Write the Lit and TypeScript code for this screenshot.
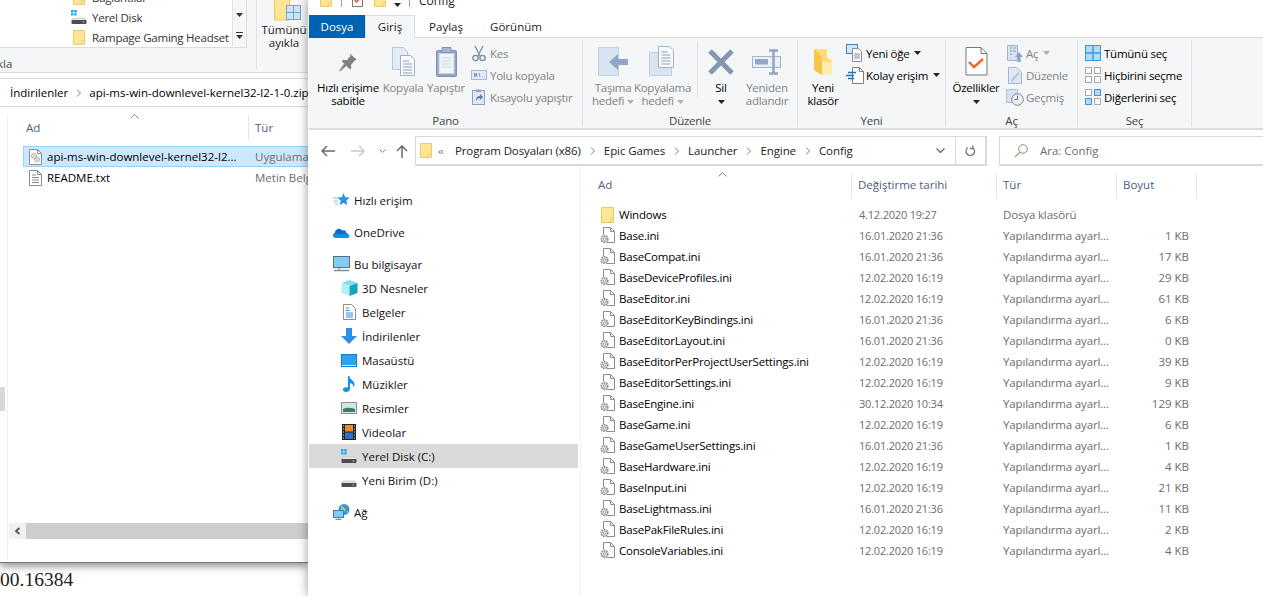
import { LitElement, html, svg, css } from "lit";
import { customElement } from "lit/decorators.js";

const folder = (w = 13, h = 16) => html`<svg width=${w} height=${h} viewBox="0 0 13 16"><path d="M.5.5h12v15H.5z" fill="#ffe695" stroke="#e9c662"/><path d="M9.5 15.5v-4h3" fill="#fff3c4" stroke="#e9c662"/></svg>`;
const gearFile = html`<svg width="15" height="17" viewBox="0 0 15 17"><path d="M3.5 8V.5h7l4 4v11H7" fill="#fff" stroke="#8c8c8c"/><path d="M10.500.5v4h4" fill="none" stroke="#8c8c8c"/><circle cx="4.500" cy="12" r="3.300" fill="#e4e4e4" stroke="#868686" stroke-width="1.500" stroke-dasharray="1.600 .8"/><circle cx="4.500" cy="12" r="1.300" fill="#fff" stroke="#a0a0a0"/></svg>`;
const txtFile = html`<svg width="13" height="16" viewBox="0 0 13 16"><path d="M.5.5h8l4 4v11H.5z" fill="#fff" stroke="#8c8c8c"/><path d="M8.500.5v4h4M3 5h4M3 7.500h7M3 10h7M3 12.500h7" fill="none" stroke="#8c8c8c"/></svg>`;
const appFile = html`<svg width="13" height="16" viewBox="0 0 13 16"><path d="M.5.5h8l4 4v11H.5z" fill="#fff" stroke="#8c8c8c"/><path d="M8.500.5v4h4" fill="none" stroke="#8c8c8c"/><circle cx="5" cy="7" r="2.600" fill="#ddd" stroke="#999" stroke-dasharray="1.300 .7"/><circle cx="8" cy="10.500" r="2.400" fill="#ddd" stroke="#999" stroke-dasharray="1.300 .7"/></svg>`;
const drive = (win: boolean) => html`<svg width="16" height="16" viewBox="0 0 16 16">${win ? svg`<path d="M0 1h2.500v2.400H0zM3.200 1h2.500v2.400H3.200zM0 4.200h2.500v2.400H0zM3.200 4.200h2.500v2.400H3.200z" fill="#19aaf0"/>` : ""}<path d="M2 9h12l1.500 2.500H.5z" fill="#e4e4e4" stroke="#bdbdbd" stroke-width=".6"/><rect x=".5" y="11" width="15" height="4" rx="1" fill="#4d4d4d"/><rect x="11.500" y="12.300" width="1.600" height="1.400" fill="#4fe04f"/></svg>`;
const pin = html`<svg width="22" height="22" viewBox="0 0 30 30"><path d="M17 3l10 9-3 1-5 6 .5 5-2 1-11-11 2-2 5 .5 5-6zM10 17l-7 10 1 1 9-8z" fill="#808080"/></svg>`;
const copyIcon = html`<svg width="25" height="29" viewBox="0 0 25 29"><path d="M1.500.5h11l4 4v18h-15z" fill="#e3ebf6" stroke="#b9c7dc"/><path d="M9.500 8.500h10l4 4v16h-14z" fill="#f8fafd" stroke="#9fb1cb"/><path d="M12 14h6M12 17h9M12 20h9M12 23h9M12 26h9" stroke="#8c9fbb"/></svg>`;
const pasteIcon = html`<svg width="21" height="30" viewBox="0 0 21 30"><rect x=".5" y="3.500" width="20" height="26" rx="1" fill="#93a5c6" stroke="#7f93b8"/><rect x="3" y="6.500" width="15" height="20" fill="#f3f6fb" stroke="#c6d0e2"/><path d="M6 .5h9v5H6z" fill="#a8b6cf" stroke="#8193b4"/><path d="M5.500 11h10M5.500 14h10M5.500 17h10M5.500 20h10" stroke="#ccd6e7"/></svg>`;
const cutIcon = html`<svg width="14" height="17" viewBox="0 0 14 17"><path d="M3 1l5 10M11 1L6 11" stroke="#8b9ab5" stroke-width="1.600" fill="none"/><circle cx="3.500" cy="13" r="2.600" fill="none" stroke="#7d8ca8" stroke-width="1.400"/><circle cx="10.500" cy="13" r="2.600" fill="none" stroke="#7d8ca8" stroke-width="1.400"/></svg>`;
const pathIcon = html`<svg width="16" height="10" viewBox="0 0 16 10"><rect x=".5" y=".5" width="15" height="9" fill="#e4ebf5" stroke="#a7b8d0"/><path d="M3 3l1 4 1-4 1 4M8 3l1 4M11 7h.6M13 7h.6" stroke="#6f83a5" fill="none" stroke-width=".8"/></svg>`;
const shortcutIcon = html`<svg width="13" height="16" viewBox="0 0 13 16"><rect x=".5" y="1.500" width="12" height="14" fill="#dfe6f1" stroke="#8fa1bf"/><rect x="4" y=".5" width="5" height="2.500" fill="#8fa1bf"/><path d="M4 12c0-4 2-5 4-5V5l3 3-3 3V9c-1.500 0-3 1-4 3z" fill="#5c7aa8"/></svg>`;
const moveIcon = html`<svg width="32" height="32" viewBox="0 0 32 32"><path d="M1.500 1.500h20v28h-20z" fill="#d9e4f3" stroke="#c3d0e3"/><path d="M31 13h-10V8l-9 8 9 8v-5h10z" fill="#8fa6c9"/></svg>`;
const copyToIcon = html`<svg width="32" height="32" viewBox="0 0 32 32"><path d="M2.500 6.500h22v23h-22z" fill="#d9e4f3" stroke="#c3d0e3"/><path d="M11.500.5h11l4 4v17h-15z" fill="#f8fafd" stroke="#9fb1cb"/><path d="M14.500 6h6M14.500 9h9M14.500 12h9M14.500 15h9M14.500 18h9" stroke="#8c9fbb"/></svg>`;
const xIcon = html`<svg width="28" height="28" viewBox="0 0 28 28"><path d="M3 3l22 22M25 3L3 25" stroke="#8596b3" stroke-width="5"/></svg>`;
const renameIcon = html`<svg width="30" height="28" viewBox="0 0 30 28"><rect x=".5" y="8.500" width="28" height="11" fill="#eaf0f8" stroke="#a5b5cf"/><rect x="3" y="11" width="13" height="5.500" fill="#93a6c5"/><path d="M17 2.500h9M17 25.500h9M21.500 2.500v23" stroke="#93a4c0" stroke-width="2.500"/></svg>`;
const newFolder = html`<svg width="20" height="28" viewBox="0 0 20 28"><path d="M1 1h13v8l5 4v14H9L1 22z" fill="#fddc7c"/><path d="M1 1l8 8v18l-8-5z" fill="#f6c64a"/><path d="M9 14h10v13H9z" fill="#ffedaf"/></svg>`;
const newItem = html`<svg width="18" height="18" viewBox="0 0 18 18"><rect x=".5" y=".5" width="11" height="9" fill="#cfe6fa" stroke="#4a7fae"/><path d="M6.500 4.500h6l3 3v10h-9z" fill="#fff" stroke="#8c8c8c"/><path d="M8 10h6M8 12h6M8 14h6" stroke="#7f8db0"/></svg>`;
const easyAccess = html`<svg width="18" height="17" viewBox="0 0 18 17"><path d="M6.500 .5h7l4 4v12h-11z" fill="#fff" stroke="#7d7d7d"/><path d="M13.500.5v4h4" fill="none" stroke="#7d7d7d"/><path d="M2 5.500h8M0 8.500h8M2 11.500h6" stroke="#2470b8" stroke-width="1.300"/></svg>`;
const propsIcon = html`<svg width="23" height="29" viewBox="0 0 23 29"><path d="M1 .5h15l6 6V28H1z" fill="#fff" stroke="#777"/><path d="M16 .5v6h6" fill="none" stroke="#777"/><path d="M4 15l5 5 9-8" fill="none" stroke="#f0651e" stroke-width="2.400"/></svg>`;
const openIcon = html`<svg width="16" height="17" viewBox="0 0 16 17"><path d="M.5.5h10v15H.5z" fill="#d7e2f1" stroke="#a4b5cf"/><path d="M3 3h2M6 3h3M3 6h2M6 6h3M3 9h2" stroke="#8498ba"/><path d="M12 7l4 5h-2.500v5h-3v-5H8z" fill="#8ea4c5"/></svg>`;
const editIcon = html`<svg width="14" height="17" viewBox="0 0 14 17"><path d="M.5.5h8l5 5v11H.500z" fill="#dee7f4" stroke="#a4b5cf"/><path d="M3 13l7-8 1.500 1.500-7 8H3z" fill="#b6c4da"/></svg>`;
const historyIcon = html`<svg width="18" height="17" viewBox="0 0 18 17"><rect x=".5" y=".5" width="11" height="13" fill="#d7e2f1" stroke="#b3c2d8"/><circle cx="11.500" cy="10.500" r="5.800" fill="#eef0f4" stroke="#7e8590"/><path d="M11.500 6.500v4h-3" fill="none" stroke="#6f7680"/></svg>`;
const B = "#3b97e0", G = "#a9a9a9", L = "#aedcfa";
const grid = (cells: string[], strokes: string[]) => html`<svg width="16" height="16" viewBox="0 0 16 16">${[[0, 0], [9, 0], [0, 9], [9, 9]].map(([x, y], i) => svg`<rect x=${x + 0.5} y=${y + 0.5} width="6" height="6" fill=${cells[i]} stroke=${strokes[i]}/>`)}</svg>`;
const selAll = html`<svg width="16" height="16" viewBox="0 0 16 16"><rect x=".5" y=".5" width="15" height="15" fill=${L} stroke=${B}/><path d="M8 0v16M0 8h16" stroke=${B} stroke-width="1.400"/></svg>`;
const selNone = grid(["#fff", "#fff", "#fff", "#fff"], [G, G, G, G]);
const selInv = grid(["#fff", L, L, "#fff"], [G, B, B, G]);
const extractIcon = html`<svg width="28" height="21" viewBox="0 0 28 21"><path d="M.5-3h15v23H.5z" fill="#ffe695" stroke="#e9c662"/><rect x="12.500" y="5.500" width="14" height="14" fill="#cfe3f6" stroke="#6ea8d8"/><path d="M19.500 5v15M12 12.500h15" stroke="#6ea8d8"/></svg>`;
const star = html`<svg width="17" height="16" viewBox="0 0 17 16"><path d="M10.500 1l1.700 4.300 4.600.3-3.500 3 1.100 4.600-3.900-2.500-3.900 2.500 1.100-4.600-3.500-3 4.600-.3z" fill="#2b8fe8"/><path d="M0 6h5M1 9h4M2 12h3" stroke="#7dbbf0"/></svg>`;
const cloud = html`<svg width="17" height="11" viewBox="0 0 17 11"><path d="M2.500 11a2.500 2.500 0 0 1-.6-4.900A4 4 0 0 1 9.200 3.500 3.500 3.500 0 0 1 13.500 6.200 2.500 2.500 0 0 1 14.500 11z" fill="#0a6cc9"/><path d="M1 9.500a3 3 0 0 1 2-3l3 1 5-1 5 1.500.5 1.500a2 2 0 0 1-2 1.500H2.500z" fill="#1490df"/></svg>`;
const pc = html`<svg width="17" height="16" viewBox="0 0 17 16"><rect x=".5" y=".5" width="16" height="11" fill="#7fcdf7" stroke="#5d6d7e"/><path d="M6 12v1.500M1 14.500h15" stroke="#7c8ea0" stroke-width="1.500"/></svg>`;
const cube = html`<svg width="17" height="16" viewBox="0 0 17 16"><path d="M8.500 0l8 3-8 3-8-3z" fill="#7fe0ea"/><path d="M.5 3l8 3v10l-8-3z" fill="#b7eef2"/><path d="M16.500 3l-8 3v10l8-3z" fill="#12a5bd"/></svg>`;
const docIcon = html`<svg width="13" height="16" viewBox="0 0 13 16"><path d="M.5.5h8l4 4v11H.5z" fill="#fff" stroke="#8c8c8c"/><path d="M3 4h3M2.500 6.500h4M3 9h7M3 11h7M3 13h7" stroke="#2b8fe8"/></svg>`;
const down = html`<svg width="16" height="16" viewBox="0 0 16 16"><path d="M5 0h6v8h5l-8 8-8-8h5z" fill="#2f8fe6"/></svg>`;
const desk = html`<svg width="16" height="13" viewBox="0 0 16 13"><rect width="16" height="13" fill="#0c7fdb"/><rect x="1" y="1" width="14" height="10" fill="#2ba3f2"/><rect x="1" y="11" width="14" height="1" fill="#cfe9fb"/></svg>`;
const music = html`<svg width="12" height="16" viewBox="0 0 12 16"><path d="M5 0h1.500c0 4 5 4 5 8.500 0 1-.4 2-1 2.500.2-2.500-2-3.500-3.500-4v6c0 2-2 3-4 3S0 15 0 13.500 2 11 5 11.500z" fill="#0f96e8"/></svg>`;
const pic = html`<svg width="16" height="12" viewBox="0 0 16 12"><rect x=".5" y=".5" width="15" height="11" fill="#cfe3f0" stroke="#909090"/><path d="M2 7c4-2 8-1 12 0v3H2z" fill="#3d7f5a"/></svg>`;
const film = html`<svg width="14" height="16" viewBox="0 0 14 16"><rect width="14" height="16" fill="#232323"/><rect x="3" y="1" width="8" height="6.500" fill="#e98d2c"/><rect x="3" y="8.500" width="8" height="6.500" fill="#2f6fc7"/><path d="M1 2h1M1 5h1M1 8h1M1 11h1M1 14h1M12 2h1M12 5h1M12 8h1M12 11h1M12 14h1" stroke="#ddd"/></svg>`;
const net = html`<svg width="17" height="16" viewBox="0 0 17 16"><circle cx="11" cy="5.500" r="5.500" fill="#3d93d8"/><path d="M8 1.500l3 2 2 3-3 1-2-2zM13 8l2-1v2z" fill="#9ed08a"/><rect x=".5" y="6.500" width="10" height="7" fill="#7fcdf7" stroke="#3b7fb8"/><path d="M5.500 14v1.500M2.500 15.500h6" stroke="#7c8ea0"/></svg>`;
const searchIcon = html`<svg width="14" height="14" viewBox="0 0 14 14"><circle cx="9" cy="5" r="4.300" fill="none" stroke="#8a8a8a"/><path d="M5.800 8.200L1 13" stroke="#c79a72" stroke-width="1.300"/></svg>`;
const caret = (c = "#333") => html`<svg class="caret" width="7" height="4" viewBox="0 0 7 4"><path d="M0 0h7L3.500 4z" fill=${c}/></svg>`;
const caretBar = html`<svg width="7" height="7" viewBox="0 0 7 7"><path d="M0 .5h7" stroke="#333"/><path d="M0 3h7L3.500 7z" fill="#333"/></svg>`;
const bcSep = html`<svg class="bcsep" width="5" height="8" viewBox="0 0 5 8"><path d="M1 .5L4.500 4 1 7.500" fill="none" stroke="#7d7d7d"/></svg>`;
const sortUp = html`<svg width="9" height="5" viewBox="0 0 9 5"><path d="M.5 4.500l4-4 4 4" fill="none" stroke="#8a8a8a"/></svg>`;

const FILES: [string, string, string][] = [
  ["Base.ini", "16.01.2020 21:36", "1 KB"], ["BaseCompat.ini", "16.01.2020 21:36", "17 KB"],
  ["BaseDeviceProfiles.ini", "12.02.2020 16:19", "29 KB"], ["BaseEditor.ini", "12.02.2020 16:19", "61 KB"],
  ["BaseEditorKeyBindings.ini", "16.01.2020 21:36", "6 KB"], ["BaseEditorLayout.ini", "16.01.2020 21:36", "0 KB"],
  ["BaseEditorPerProjectUserSettings.ini", "12.02.2020 16:19", "39 KB"], ["BaseEditorSettings.ini", "12.02.2020 16:19", "9 KB"],
  ["BaseEngine.ini", "30.12.2020 10:34", "129 KB"], ["BaseGame.ini", "12.02.2020 16:19", "6 KB"],
  ["BaseGameUserSettings.ini", "16.01.2020 21:36", "1 KB"], ["BaseHardware.ini", "12.02.2020 16:19", "4 KB"],
  ["BaseInput.ini", "12.02.2020 16:19", "21 KB"], ["BaseLightmass.ini", "16.01.2020 21:36", "11 KB"],
  ["BasePakFileRules.ini", "12.02.2020 16:19", "2 KB"], ["ConsoleVariables.ini", "12.02.2020 16:19", "4 KB"],
];

@customElement("app-root")
export class AppRoot extends LitElement {
  static styles = css`
    :host { display: block; position: relative; width: 1263px; height: 596px; overflow: hidden; background: #fff;
      font-family: "Open Sans", "Noto Sans", sans-serif; font-size: 11.5px; color: #000; }
    svg { display: block; flex: none; }
    .caret { display: inline-block; vertical-align: middle; }
    .desk-text { position: absolute; left: 0; top: 568px; font: 19.5px/24px "Liberation Serif", serif; color: #222; }
    .win { position: absolute; background: #fff; overflow: hidden; }
    .back { left: 0; top: 0; width: 308px; height: 562px; border-bottom: 1px solid #777; box-shadow: 0 3px 8px rgba(0,0,0,.45); display: flex; flex-direction: column; }
    .main { left: 308px; top: 0; width: 955px; height: 596px; box-shadow: 0 0 10px rgba(0,0,0,.4); display: flex; flex-direction: column; }

    /* back window */
    .b-ribbon { height: 72px; flex: none; background: #f5f6f7; border-bottom: 1px solid #dadbdc; display: flex; }
    .b-left { width: 256px; flex: none; display: flex; flex-direction: column; border-right: 1px solid #e1e3e6; margin-bottom: 3px; }
    .gal { height: 47px; width: 246px; flex: none; background: #fff; border-right: 1px solid #dcdcdc; border-bottom: 1px solid #dcdcdc; display: flex; overflow: hidden; }
    .gal-list { flex: 1; display: flex; flex-direction: column; justify-content: flex-end; padding-left: 71px; padding-bottom: 0; }
    .gal-item { height: 20px; flex: none; display: flex; align-items: center; gap: 5px; color: #333; white-space: nowrap; }
    .gal-item .gi { width: 16px; flex: none; display: flex; justify-content: center; }
    .gal-item span { letter-spacing: -.25px; }
    .gal-scroll { width: 13px; flex: none; border-left: 1px solid #e3e3e3; background: #f5f6f7; display: flex; flex-direction: column; align-items: center; justify-content: flex-end; gap: 15px; padding-bottom: 8px; }
    .b-lbl { padding-top: 9px; margin-left: -3px; line-height: 14px; color: #444; }
    .b-extract { flex: 1; display: flex; flex-direction: column; align-items: center; color: #222; line-height: 13px; padding-left: 3px; white-space: nowrap; }
    .b-ico { height: 21px; margin-bottom: 2px; padding-left: 8px; }
    .b-addr { height: 27px; flex: none; margin-top: 5px; border-top: 1px solid #d9d9d9; border-bottom: 1px solid #d9d9d9; display: flex; align-items: center; gap: 8px; padding-left: 10px; white-space: nowrap; }
    .b-body { flex: 1; margin-left: 7px; border-left: 1px solid #f0f0f0; display: flex; flex-direction: column; min-height: 0; margin-top: 8px; }
    .b-head { height: 30px; flex: none; margin-top: -3px; display: flex; align-items: center; padding-left: 18px; color: #4c607a; position: relative; }
    .b-head .ad { width: 222px; }
    .b-head .tur { border-left: 1px solid #e5e5e5; height: 25px; padding-left: 6px; line-height: 25px; }
    .sort { position: absolute; left: 122px; top: 2px; }
    .b-row { height: 21px; flex: none; margin-left: 15px; display: flex; align-items: center; padding-left: 6px; box-sizing: border-box; white-space: nowrap; }
    .b-row.sel { background: #cce8ff; border: 1px solid #99d1ff; border-right: 0; padding-left: 5px; margin-top: 4px; }
    .b-row .n { width: 208px; margin-left: 5px; overflow: hidden; flex: none; }
    .b-row .t { color: #6d6d6d; }
    .b-spacer { flex: 1; }
    .hbar { height: 16px; flex: none; display: flex; margin-left: 1px; margin-bottom: 23px; background: #f0f0f0; }
    .hbar .btn { width: 17px; display: flex; align-items: center; justify-content: center; flex: none; }
    .hbar .thumb { flex: 1; background: #cdcdcd; }
    .sliver { position: absolute; left: 0; top: 387px; width: 5px; height: 24px; background: #d9d9d9; }

    /* title + tabs */
    .title { height: 15px; flex: none; overflow: hidden; }
    .title-row { display: flex; align-items: flex-end; height: 7px; padding-left: 12px; }
    .title-row > * { flex: none; }
    .tsep { width: 1px; height: 9px; background: #a0a0a0; margin: 0 10px 0 9px; }
    .tsep.last { margin: 0 0 0 8px; }
    .tname { margin-left: 9px; line-height: 14px; height: 14px; margin-bottom: -1px; font-size: 12px; color: #222; }
    .sp11 { width: 11px; } .sp8 { width: 8px; } .sp16 { width: 16px; } .sp14 { width: 14px; } .sp10 { width: 10px; }
    .tabs { height: 23px; flex: none; display: flex; margin-left: 1px; position: relative; z-index: 1; margin-bottom: -1px; line-height: 24px; }
    .tab { text-align: center; color: #222; box-sizing: border-box; }
    .tab.file { width: 56px; background: #0063b1; color: #fff; }
    .tab.on { width: 50px; background: #f5f6f7; border: 1px solid #dadbdc; border-bottom: 0; line-height: 22px; }
    .tab.p { width: 62px; }
    .tab.g { width: 78px; }

    /* ribbon */
    .ribbon { flex: none; height: 93px; background: #f5f6f7; border-top: 1px solid #dadbdc; border-bottom: 2px solid #dadbdc; margin-left: 1px; display: flex; box-sizing: border-box; letter-spacing: -.25px; }
    .group { margin: 2px 0 1px; border-right: 1px solid #e1e3e6; display: flex; flex-direction: column; flex: none; box-sizing: border-box; }
    .g-body { flex: 1; display: flex; min-height: 0; }
    .g-label { height: 14px; flex: none; text-align: center; color: #444; line-height: 16px; }
    .large { display: flex; flex-direction: column; align-items: center; flex: none; line-height: 13px; text-align: center; white-space: nowrap; padding-top: 2px; }
    .large .ic { height: 39px; display: flex; align-items: center; justify-content: center; }
    .dis { color: #838383; }
    .vsep { width: 1px; background: #e1e3e6; height: 56px; margin: 2px 1px 0 10px; flex: none; }
    .smalls { display: flex; flex-direction: column; flex: none; padding-top: 2px; white-space: nowrap; }
    .smalls.new { margin-left: -2px; }
    .smalls.open { margin-left: 6px; }
    .smalls.clip { margin-left: 3px; }
    .small { height: 22px; display: flex; align-items: center; }
    .small .i { width: 17px; display: flex; justify-content: center; flex: none; margin-right: 3px; }
    .small .caret { margin-left: 5px; }

    /* address */
    .bar { height: 30px; flex: none; margin-top: 6px; display: flex; align-items: stretch; margin-left: 13px; }
    .nav-btns { width: 94px; flex: none; display: flex; align-items: center; }
    .addr { width: 572px; flex: none; box-sizing: border-box; border: 2px solid #d9d9d9; border-width: 1px 2px 2px 1px; display: flex; align-items: center; background: #fff; white-space: nowrap; }
    .crumbs { flex: 1; display: flex; align-items: center; padding-left: 4px; color: #222; letter-spacing: -.1px; }
    .crumbs .chev { color: #777; margin: 0 12px 0 6px; letter-spacing: -1px; }
    .crumbs .bcsep { margin: 0 9px; }
    .addr-drop { width: 30px; height: 100%; display: flex; align-items: center; justify-content: center; }
    .addr-ref { width: 29px; height: 100%; display: flex; align-items: center; justify-content: center; border-left: 1px solid #d9d9d9; }
    .search { flex: 1; margin-left: 12px; box-sizing: border-box; border: 2px solid #d9d9d9; border-width: 1px 0 2px 1px; display: flex; align-items: center; padding-left: 14px; gap: 12px; color: #6d6d6d; }

    /* content */
    .content { flex: 1; display: flex; min-height: 0; }
    .nav { width: 271px; flex: none; border-right: 1px solid #f0f0f0; padding-top: 22px; margin-left: 1px; }
    .nav-row { height: 24px; display: flex; align-items: center; white-space: nowrap; margin-right: 2px; color: #111; }
    .nav-row.top { padding-left: 23px; }
    .nav-row.sub { padding-left: 31px; }
    .nav-row.sel { background: #d9d9d9; }
    .nav-row.gap { margin-top: 8px; }
    .nav-row .i { width: 18px; display: flex; justify-content: center; flex: none; margin-right: 4px; }
    .list { flex: 1; min-width: 0; padding-top: 8px; }
    .heads { height: 25px; display: flex; position: relative; padding-left: 17px; color: #4c607a; line-height: 22px; }
    .heads .h { box-sizing: border-box; flex: none; border-right: 1px solid #e5e5e5; height: 25px; }
    .heads .sort2 { position: absolute; left: 137px; top: -2px; }
    .h1 { width: 254px; } .h2 { width: 145px; padding-left: 6px; } .h3 { width: 120px; padding-left: 6px; } .h4 { width: 80px; padding-left: 6px; }
    .rows { margin-top: 5px; }
    .row { height: 21px; display: flex; align-items: center; padding-left: 18px; white-space: nowrap; }
    .row .ic { width: 16px; margin-right: 4px; flex: none; display: flex; justify-content: center; }
    .row .nm { width: 240px; flex: none; overflow: hidden; letter-spacing: -.2px; }
    .row .dt { width: 144px; flex: none; color: #6d6d6d; font-size: 11px; letter-spacing: -.2px; }
    .row .ty { width: 110px; flex: none; color: #6d6d6d; overflow: hidden; letter-spacing: -.15px; }
    .row .sz { width: 76px; flex: none; text-align: right; color: #6d6d6d; }
  `;

  private large(icon: unknown, lines: unknown[], w: number, dis = false) {
    return html`<div class="large ${dis ? "dis" : ""}" style="width:${w}px"><div class="ic">${icon}</div>${lines.map((l) => html`<div>${l}</div>`)}</div>`;
  }
  private small(icon: unknown, label: unknown, dis = false) {
    return html`<div class="small ${dis ? "dis" : ""}"><div class="i">${icon}</div>${label}</div>`;
  }
  private navRow(icon: unknown, label: string, cls: string) {
    return html`<div class="nav-row ${cls}"><div class="i">${icon}</div>${label}</div>`;
  }

  render() {
    return html`
      <div class="desk-text">00.16384</div>
      <div class="win back">
        <div class="b-ribbon">
          <div class="b-left">
            <div class="gal">
              <div class="gal-list">
                <div class="gal-item"><div class="gi">${folder(12, 15)}</div><span>Bağlantılar</span></div>
                <div class="gal-item"><div class="gi">${drive(true)}</div><span>Yerel Disk</span></div>
                <div class="gal-item"><div class="gi">${folder(12, 15)}</div><span>Rampage Gaming Headset</span></div>
              </div>
              <div class="gal-scroll">${caret()}${caretBar}</div>
            </div>
            <div class="b-lbl">kla</div>
          </div>
          <div class="b-extract">
            <div class="b-ico">${extractIcon}</div>
            <div>Tümünü</div><div>ayıkla</div>
          </div>
        </div>
        <div class="b-addr"><span>İndirilenler</span>${bcSep}<span>api-ms-win-downlevel-kernel32-l2-1-0.zip</span></div>
        <div class="b-body">
          <div class="b-head"><span class="sort">${sortUp}</span><div class="ad">Ad</div><div class="tur">Tür</div></div>
          <div class="b-row sel">${appFile}<div class="n">api-ms-win-downlevel-kernel32-l2...</div><div class="t">Uygulama</div></div>
          <div class="b-row">${txtFile}<div class="n">README.txt</div><div class="t">Metin Belgesi</div></div>
          <div class="b-spacer"></div>
          <div class="hbar"><div class="btn"><svg width="7" height="8" viewBox="0 0 7 8"><path d="M5.500 1L2 4l3.500 3" fill="none" stroke="#555" stroke-width="1.800"/></svg></div><div class="thumb"></div></div>
        </div>
        <div class="sliver"></div>
      </div>

      <div class="win main">
        <div class="title">
          <div class="title-row">
            ${folder(12, 15)}<div class="tsep"></div>
            <svg width="11" height="15" viewBox="0 0 11 15"><path d="M.5.5h10v14H.5z" fill="#fff" stroke="#777"/><path d="M2.500 8l2 2 4-4" fill="none" stroke="#e0562a" stroke-width="1.400"/></svg>
            <div class="sp11"></div>${folder(12, 15)}
            <div class="sp8"></div>${caret("#222")}<div class="tsep last"></div>
            <div class="tname">Config</div>
          </div>
        </div>
        <div class="tabs">
          <div class="tab file">Dosya</div><div class="tab on">Giriş</div><div class="tab p">Paylaş</div><div class="tab g">Görünüm</div>
        </div>
        <div class="ribbon">
          <div class="group" style="width:274px">
            <div class="g-body" style="padding-left:6px">
              ${this.large(pin, ["Hızlı erişime", "sabitle"], 66)}
              ${this.large(copyIcon, ["Kopyala"], 44, true)}
              ${this.large(pasteIcon, ["Yapıştır"], 42, true)}
              <div class="smalls dis clip">
                ${this.small(cutIcon, "Kes")}${this.small(pathIcon, "Yolu kopyala")}${this.small(shortcutIcon, "Kısayolu yapıştır")}
              </div>
            </div>
            <div class="g-label">Pano</div>
          </div>
          <div class="group" style="width:215px">
            <div class="g-body" style="padding-left:5px">
              ${this.large(moveIcon, ["Taşıma", html`hedefi ${caret("#b0b0b0")}`], 50, true)}
              ${this.large(copyToIcon, ["Kopyalama", html`hedefi ${caret("#b0b0b0")}`], 49, true)}
              <div class="vsep"></div>
              ${this.large(xIcon, ["Sil", caret("#222")], 44)}
              ${this.large(renameIcon, ["Yeniden", "adlandır"], 48, true)}
            </div>
            <div class="g-label">Düzenle</div>
          </div>
          <div class="group" style="width:148px">
            <div class="g-body">
              ${this.large(newFolder, ["Yeni", "klasör"], 50)}
              <div class="smalls new">
                ${this.small(newItem, html`Yeni öğe ${caret("#222")}`)}
                ${this.small(easyAccess, html`Kolay erişim ${caret("#222")}`)}
              </div>
            </div>
            <div class="g-label">Yeni</div>
          </div>
          <div class="group" style="width:132px">
            <div class="g-body" style="padding-left:6px">
              ${this.large(propsIcon, ["Özellikler", caret("#222")], 48)}
              <div class="smalls dis open">
                ${this.small(openIcon, html`Aç ${caret("#b0b0b0")}`)}${this.small(editIcon, "Düzenle")}${this.small(historyIcon, "Geçmiş")}
              </div>
            </div>
            <div class="g-label">Aç</div>
          </div>
          <div class="group" style="width:114px">
            <div class="g-body" style="padding-left:6px">
              <div class="smalls">
                ${this.small(selAll, "Tümünü seç")}${this.small(selNone, "Hiçbirini seçme")}${this.small(selInv, "Diğerlerini seç")}
              </div>
            </div>
            <div class="g-label">Seç</div>
          </div>
        </div>
        <div class="bar">
          <div class="nav-btns">
            <svg width="14" height="12" viewBox="0 0 14 12"><path d="M6 1L1 6l5 5M1 6h13" fill="none" stroke="#6a6a6a" stroke-width="1.500"/></svg>
            <div class="sp16"></div>
            <svg width="14" height="12" viewBox="0 0 14 12"><path d="M8 1l5 5-5 5M13 6H0" fill="none" stroke="#c9c9c9" stroke-width="1.500"/></svg>
            <div class="sp14"></div>
            <svg width="7" height="5" viewBox="0 0 7 5"><path d="M.5.5L3.500 3.500 6.500.5" fill="none" stroke="#8a8a8a"/></svg>
            <div class="sp10"></div>
            <svg width="12" height="13" viewBox="0 0 12 13"><path d="M1 6l5-5 5 5M6 1v12" fill="none" stroke="#6a6a6a" stroke-width="1.500"/></svg>
          </div>
          <div class="addr">
            <div class="crumbs">
              ${folder(12, 15)}<span class="chev">‹‹</span>
              <span>Program Dosyaları (x86)</span>${bcSep}<span>Epic Games</span>${bcSep}<span>Launcher</span>${bcSep}<span>Engine</span>${bcSep}<span>Config</span>
            </div>
            <div class="addr-drop"><svg width="9" height="5" viewBox="0 0 9 5"><path d="M.5.5l4 4 4-4" fill="none" stroke="#666" stroke-width="1.200"/></svg></div>
            <div class="addr-ref"><svg width="11" height="12" viewBox="0 0 11 12"><path d="M7.500 2.500a4.300 4.300 0 1 1-4.500 0M7.800.5v3h-3" fill="none" stroke="#777" stroke-width="1.300"/></svg></div>
          </div>
          <div class="search">${searchIcon}<span>Ara: Config</span></div>
        </div>
        <div class="content">
          <div class="nav">
            ${this.navRow(star, "Hızlı erişim", "top")}
            ${this.navRow(cloud, "OneDrive", "top gap")}
            ${this.navRow(pc, "Bu bilgisayar", "top gap")}
            ${this.navRow(cube, "3D Nesneler", "sub")}
            ${this.navRow(docIcon, "Belgeler", "sub")}
            ${this.navRow(down, "İndirilenler", "sub")}
            ${this.navRow(desk, "Masaüstü", "sub")}
            ${this.navRow(music, "Müzikler", "sub")}
            ${this.navRow(pic, "Resimler", "sub")}
            ${this.navRow(film, "Videolar", "sub")}
            ${this.navRow(drive(true), "Yerel Disk (C:)", "sub sel")}
            ${this.navRow(drive(false), "Yeni Birim (D:)", "sub")}
            ${this.navRow(net, "Ağ", "top gap")}
          </div>
          <div class="list">
            <div class="heads">
              <span class="sort2">${sortUp}</span>
              <div class="h h1">Ad</div><div class="h h2">Değiştirme tarihi</div><div class="h h3">Tür</div><div class="h h4">Boyut</div>
            </div>
            <div class="rows">
              <div class="row"><div class="ic">${folder()}</div><div class="nm">Windows</div><div class="dt">4.12.2020 19:27</div><div class="ty">Dosya klasörü</div><div class="sz"></div></div>
              ${FILES.map(([n, d, s]) => html`<div class="row"><div class="ic">${gearFile}</div><div class="nm">${n}</div><div class="dt">${d}</div><div class="ty">Yapılandırma ayarl...</div><div class="sz">${s}</div></div>`)}
            </div>
          </div>
        </div>
      </div>
    `;
  }
}
